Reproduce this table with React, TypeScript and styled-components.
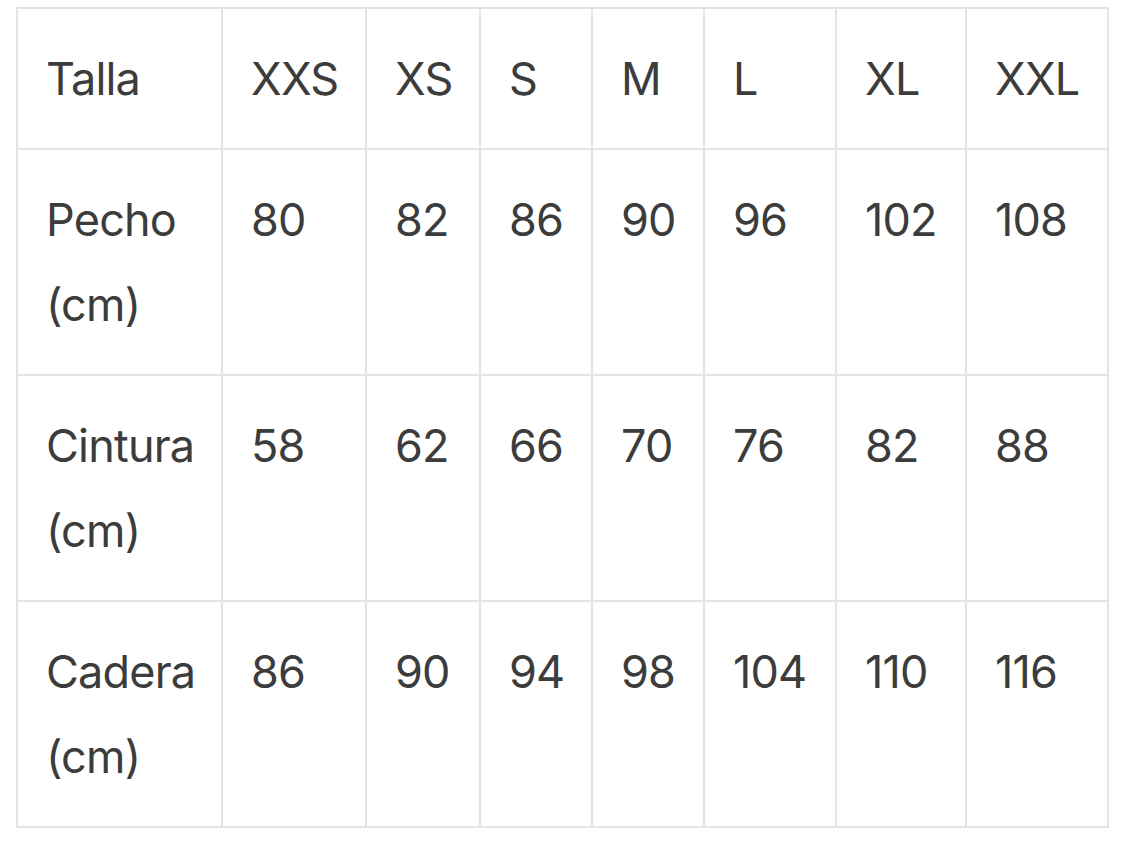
import React from "react";
import styled, { createGlobalStyle } from "styled-components";

const Global = createGlobalStyle`
  html, body { margin: 0; padding: 0; background: #ffffff; }
  body { font-family: Inter, "Noto Sans", "Liberation Sans", sans-serif; }
`;

const Page = styled.div`
  padding: 7px 0 0 16px;
`;

const Table = styled.table`
  width: 1091px;
  table-layout: fixed;
  border-collapse: collapse;
  color: #3c3c3c;
  font-size: 45px;
  letter-spacing: -0.8px;
  line-height: 85px;
`;

const Col = styled.col<{ $w: number }>`
  width: ${(p) => p.$w}px;
`;

const Row = styled.tr<{ $head?: boolean }>`
  height: ${(p) => (p.$head ? 138 : 226)}px;
`;

const Cell = styled.td`
  border: 2px solid #e4e4e4;
  padding: 27px 8px 27px 28px;
  vertical-align: top;
  text-align: left;
  font-weight: 400;
  white-space: normal;
`;

const widths = [205, 144, 114, 112, 112, 132, 130, 142];
const header = ["Talla", "XXS", "XS", "S", "M", "L", "XL", "XXL"];
const rows: [string, string[]][] = [
  ["Pecho", ["80", "82", "86", "90", "96", "102", "108"]],
  ["Cintura", ["58", "62", "66", "70", "76", "82", "88"]],
  ["Cadera", ["86", "90", "94", "98", "104", "110", "116"]],
];

export default function App() {
  return (
    <>
      <Global />
      <Page>
        <Table>
          <colgroup>
            {widths.map((w, i) => (
              <Col key={i} $w={w} />
            ))}
          </colgroup>
          <tbody>
            <Row $head>
              {header.map((h) => (
                <Cell key={h}>{h}</Cell>
              ))}
            </Row>
            {rows.map(([label, vals]) => (
              <Row key={label}>
                <Cell>
                  {label}
                  <br />
                  (cm)
                </Cell>
                {vals.map((v, i) => (
                  <Cell key={i}>{v}</Cell>
                ))}
              </Row>
            ))}
          </tbody>
        </Table>
      </Page>
    </>
  );
}
